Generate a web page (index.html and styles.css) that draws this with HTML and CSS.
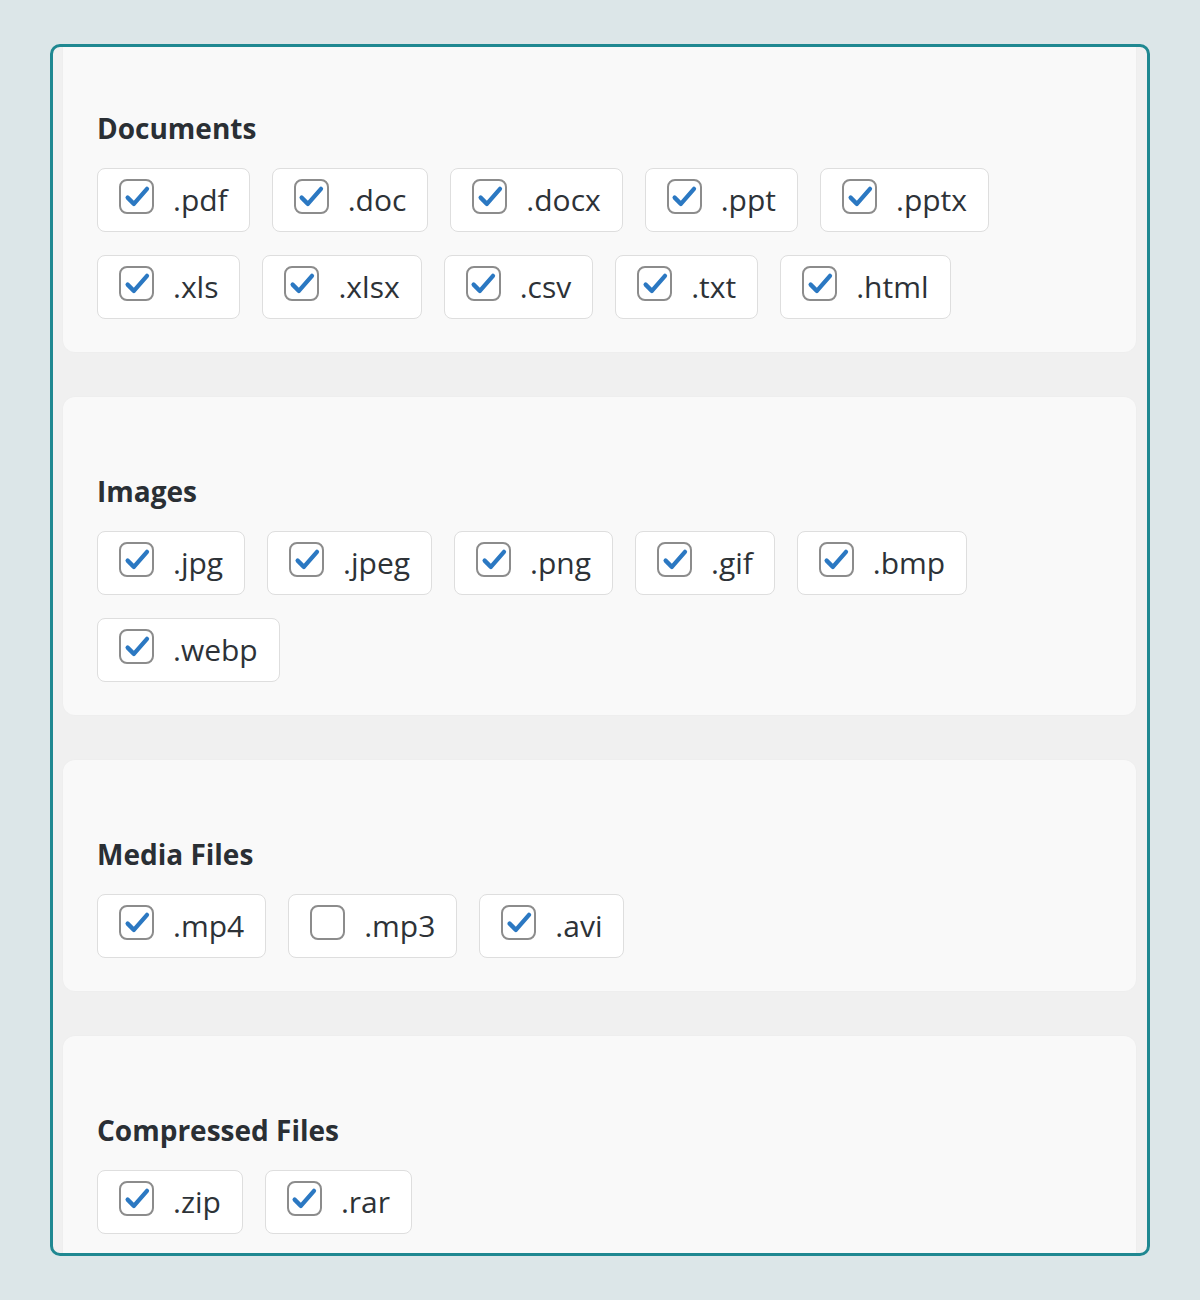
FILE: index.html
```html
<!DOCTYPE html>
<html>
<head>
<meta charset="utf-8">
<link rel="stylesheet" href="styles.css">
</head>
<body>
<div class="frame">
  <div class="scroller">
    <section class="card">
      <h2 class="title">Documents</h2>
      <div class="chips">
        <label class="chip"><span class="box on"><svg viewBox="0 0 24 24"><path d="M4.5 12.5 L9.5 17.5 L20 5.5"/></svg></span><span class="ext">.pdf</span></label>
        <label class="chip"><span class="box on"><svg viewBox="0 0 24 24"><path d="M4.5 12.5 L9.5 17.5 L20 5.5"/></svg></span><span class="ext">.doc</span></label>
        <label class="chip"><span class="box on"><svg viewBox="0 0 24 24"><path d="M4.5 12.5 L9.5 17.5 L20 5.5"/></svg></span><span class="ext">.docx</span></label>
        <label class="chip"><span class="box on"><svg viewBox="0 0 24 24"><path d="M4.5 12.5 L9.5 17.5 L20 5.5"/></svg></span><span class="ext">.ppt</span></label>
        <label class="chip"><span class="box on"><svg viewBox="0 0 24 24"><path d="M4.5 12.5 L9.5 17.5 L20 5.5"/></svg></span><span class="ext">.pptx</span></label>
        <label class="chip"><span class="box on"><svg viewBox="0 0 24 24"><path d="M4.5 12.5 L9.5 17.5 L20 5.5"/></svg></span><span class="ext">.xls</span></label>
        <label class="chip"><span class="box on"><svg viewBox="0 0 24 24"><path d="M4.5 12.5 L9.5 17.5 L20 5.5"/></svg></span><span class="ext">.xlsx</span></label>
        <label class="chip"><span class="box on"><svg viewBox="0 0 24 24"><path d="M4.5 12.5 L9.5 17.5 L20 5.5"/></svg></span><span class="ext">.csv</span></label>
        <label class="chip"><span class="box on"><svg viewBox="0 0 24 24"><path d="M4.5 12.5 L9.5 17.5 L20 5.5"/></svg></span><span class="ext">.txt</span></label>
        <label class="chip"><span class="box on"><svg viewBox="0 0 24 24"><path d="M4.5 12.5 L9.5 17.5 L20 5.5"/></svg></span><span class="ext">.html</span></label>
      </div>
    </section>
    <section class="card">
      <h2 class="title">Images</h2>
      <div class="chips">
        <label class="chip"><span class="box on"><svg viewBox="0 0 24 24"><path d="M4.5 12.5 L9.5 17.5 L20 5.5"/></svg></span><span class="ext">.jpg</span></label>
        <label class="chip"><span class="box on"><svg viewBox="0 0 24 24"><path d="M4.5 12.5 L9.5 17.5 L20 5.5"/></svg></span><span class="ext">.jpeg</span></label>
        <label class="chip"><span class="box on"><svg viewBox="0 0 24 24"><path d="M4.5 12.5 L9.5 17.5 L20 5.5"/></svg></span><span class="ext">.png</span></label>
        <label class="chip"><span class="box on"><svg viewBox="0 0 24 24"><path d="M4.5 12.5 L9.5 17.5 L20 5.5"/></svg></span><span class="ext">.gif</span></label>
        <label class="chip"><span class="box on"><svg viewBox="0 0 24 24"><path d="M4.5 12.5 L9.5 17.5 L20 5.5"/></svg></span><span class="ext">.bmp</span></label>
        <label class="chip"><span class="box on"><svg viewBox="0 0 24 24"><path d="M4.5 12.5 L9.5 17.5 L20 5.5"/></svg></span><span class="ext">.webp</span></label>
      </div>
    </section>
    <section class="card">
      <h2 class="title">Media Files</h2>
      <div class="chips">
        <label class="chip"><span class="box on"><svg viewBox="0 0 24 24"><path d="M4.5 12.5 L9.5 17.5 L20 5.5"/></svg></span><span class="ext">.mp4</span></label>
        <label class="chip"><span class="box"></span><span class="ext">.mp3</span></label>
        <label class="chip"><span class="box on"><svg viewBox="0 0 24 24"><path d="M4.5 12.5 L9.5 17.5 L20 5.5"/></svg></span><span class="ext">.avi</span></label>
      </div>
    </section>
    <section class="card">
      <h2 class="title">Compressed Files</h2>
      <div class="chips">
        <label class="chip"><span class="box on"><svg viewBox="0 0 24 24"><path d="M4.5 12.5 L9.5 17.5 L20 5.5"/></svg></span><span class="ext">.zip</span></label>
        <label class="chip"><span class="box on"><svg viewBox="0 0 24 24"><path d="M4.5 12.5 L9.5 17.5 L20 5.5"/></svg></span><span class="ext">.rar</span></label>
      </div>
    </section>
  </div>
</div>
</body>
</html>
```

FILE: styles.css
```css
html, body {
  margin: 0;
  padding: 0;
}
body {
  background: #dce6e8;
  font-family: "Open Sans", "Noto Sans", sans-serif;
  padding: 44px 50px 0 50px;
  height: 1300px;
  box-sizing: border-box;
}
.frame {
  width: 1100px;
  height: 1212px;
  box-sizing: border-box;
  border: 3px solid #1f8891;
  border-radius: 10px;
  background: #f0f0f0;
  overflow: hidden;
}
.scroller {
  margin-top: -13px;
  padding: 0 11px 0 10px;
  display: flex;
  flex-direction: column;
  gap: 45px;
}
.card {
  background: #f9f9f9;
  border-radius: 12px;
  padding: 76px 34px 33px 34px;
  box-shadow: 0 0 2px rgba(0,0,0,0.03);
}
.title {
  margin: 0 0 22px 0;
  font-size: 28px;
  line-height: 36px;
  font-weight: 700;
  color: #2a2f34;
  letter-spacing: 0;
}
.chips {
  display: flex;
  flex-wrap: wrap;
  column-gap: 22px;
  row-gap: 23px;
  max-width: 1010px;
}
.chip {
  display: flex;
  align-items: center;
  height: 64px;
  box-sizing: border-box;
  padding: 0 21px 0 21px;
  background: #fff;
  border: 1px solid #dedede;
  border-radius: 8px;
}
.box {
  width: 31px;
  height: 31px;
  border: 2px solid #8c8c8c;
  border-radius: 8px;
  background: #fff;
  margin: 0 19px 7px 0;
  flex: none;
  display: flex;
  align-items: center;
  justify-content: center;
}
.box svg {
  width: 30px;
  height: 30px;
}
.box svg path {
  fill: none;
  stroke: #2b78c2;
  stroke-width: 3.4;
  stroke-linecap: round;
  stroke-linejoin: round;
}
.ext {
  font-size: 30px;
  line-height: 40px;
  color: #2d3237;
}
```
